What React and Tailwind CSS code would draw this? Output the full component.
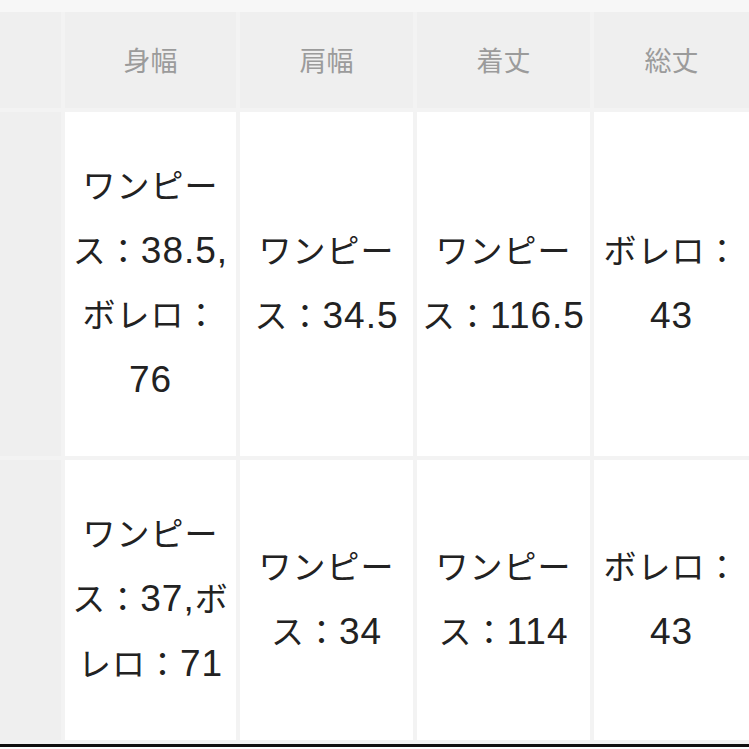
const headers = ['', '身幅', '肩幅', '着丈', '総丈'];

const rows = [
  {
    h: 'h-[344px]',
    cells: [
      ['ワンピー', 'ス：38.5,', 'ボレロ：', '76'],
      ['ワンピー', 'ス：34.5'],
      ['ワンピー', 'ス：116.5'],
      ['ボレロ：', '43'],
    ],
  },
  {
    h: 'h-[280px]',
    cells: [
      ['ワンピー', 'ス：37,ボ', 'レロ：71'],
      ['ワンピー', 'ス：34'],
      ['ワンピー', 'ス：114'],
      ['ボレロ：', '43'],
    ],
  },
];

// digits render a bit larger than the kana in the screenshot
function Line({ text }) {
  const parts = text.split(/([0-9.,]+)/).filter(Boolean);
  return (
    <div>
      {parts.map((p, i) =>
        /[0-9]/.test(p) ? (
          <span key={i} className="text-[37px]">{p}</span>
        ) : (
          <span key={i}>{p}</span>
        )
      )}
    </div>
  );
}

export default function App() {
  return (
    <div
      lang="ja"
      className="w-[749px] h-[749px] overflow-hidden bg-white"
      style={{ fontFamily: '"Liberation Sans", "Noto Sans CJK JP", sans-serif' }}
    >
      <div className="h-[12px] bg-[#f7f7f7]" />
      <div className="grid grid-cols-[61px_171px_173px_173px_1fr] gap-[4px] bg-[#f3f3f3] pb-[4px] border-b-[3px] border-[#111]">
        {headers.map((t, i) => (
          <div
            key={i}
            className="h-[96px] bg-[#efefef] flex items-center justify-center text-[27px] text-[#9b9b9b] pt-[4px]"
          >
            {t}
          </div>
        ))}
        {rows.map((r, ri) => (
          <div key={ri} className="contents">
            <div className={`${r.h} bg-[#efefef]`} />
            {r.cells.map((lines, ci) => (
              <div
                key={ci}
                className={`${r.h} bg-white flex flex-col items-center justify-center text-[33px] leading-[64px] text-[#222] tracking-[1px] whitespace-nowrap`}
              >
                {lines.map((l, li) => (
                  <Line key={li} text={l} />
                ))}
              </div>
            ))}
          </div>
        ))}
      </div>
    </div>
  );
}
